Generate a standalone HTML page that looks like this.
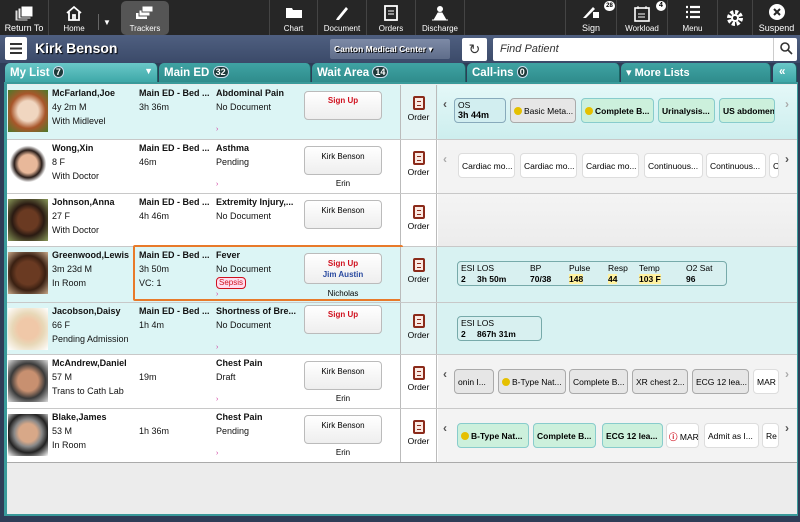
<!DOCTYPE html>
<html><head><meta charset="utf-8"><style>
*{box-sizing:border-box;margin:0;padding:0}
body{width:800px;height:522px;overflow:hidden;background:#2f3d57;font-family:"Liberation Sans","DejaVu Sans",sans-serif;position:relative}
.a{position:absolute}
.tb{background:#262626;height:35px;left:0;top:0;width:800px}
.btn{position:absolute;top:0;height:35px;color:#fff;font-size:8px;text-align:center;border-right:1px solid #444}
.btn .l{position:absolute;bottom:2px;left:0;right:0}
.btn svg{position:absolute;left:50%;top:5px;transform:translateX(-50%)}
.hdr{left:0;top:35px;width:800px;height:28px;background:linear-gradient(#4f5f80,#3b4a69)}
.tab{position:absolute;top:63px;height:19px;background:linear-gradient(#3fa3a3,#2f8c8c);color:#fff;font-weight:bold;font-size:11.5px;padding:3px 0 0 5px;border-radius:5px 5px 0 0;border-right:1px solid #1c6464}
.cnt{display:inline-block;background:#1e3a3a;border:1px solid #cde;border-radius:6px;font-size:9px;padding:0 2px;line-height:10px;vertical-align:1px}
.row{position:absolute;left:7px;width:790px;border-bottom:1px solid #c8c8c8}
.ph{position:absolute;left:1px;top:5px;width:40px;height:42px}
.t{position:absolute;font-size:9px;color:#111;line-height:14px;white-space:nowrap}
.b{font-weight:bold}
.sb{position:absolute;left:297px;top:6px;width:78px;height:29px;border:1px solid #bbb;border-radius:4px;background:linear-gradient(#fff,#eee);font-size:8px;text-align:center;padding-top:5px}
.red{color:#d0101e;font-weight:bold}
.sub{position:absolute;left:297px;width:78px;text-align:center;font-size:8px;top:39px}
.ord{position:absolute;left:393px;top:0;width:37px;bottom:0;border-left:1px solid #bbb;border-right:1px solid #bbb;font-size:8.5px;text-align:center;padding-top:11px}
.ord i{display:block;margin:0 auto 2px;width:12px;height:14px;border:2px solid #8b2a1a;border-radius:2px;background:#fbe9e2;position:relative}
.ord i:after{content:"";position:absolute;left:2px;top:3px;width:4px;height:3px;border-top:1px solid #8b2a1a;border-bottom:1px solid #8b2a1a}
.chip{position:absolute;height:25px;border:1px solid #aaa;border-radius:4px;font-size:8.5px;font-weight:bold;padding:7px 3px 0;white-space:nowrap;overflow:hidden}
.w{background:#fff;border-color:#ddd;font-weight:normal}
.g{background:#ccf0dc;border-color:#8cc}
.gy{background:#e6e6e6}
.dot{display:inline-block;width:8px;height:8px;border-radius:50%;background:#e5c000;margin-right:2px;vertical-align:-1px}
.arr{position:absolute;font-size:12px;font-weight:bold;color:#555;top:12px}
.pk{position:absolute;left:209px;top:41px;font-size:7px;color:#d040a0}
</style></head><body>
<div class="a tb"></div>
<div class="btn" style="left:0;width:49px"><svg width="20" height="18"><rect x="1" y="5" width="13" height="11" fill="#ddd" stroke="#222"/><rect x="4" y="3" width="13" height="11" fill="#eee" stroke="#222"/><rect x="7" y="1" width="12" height="11" fill="#fff" stroke="#222"/></svg><div class="l" style="font-size:9px">Return To</div></div>
<div class="btn" style="left:50px;width:48px;border-right:0"><svg width="18" height="16"><path d="M2 8 L9 2 L16 8 M4 7 V15 H14 V7 M8 15 V10 H10 V15" stroke="#fff" stroke-width="1.8" fill="none"/></svg><div class="l">Home</div></div>
<div class="a" style="left:98px;top:14px;width:1px;height:16px;background:#666"></div>
<div class="a" style="left:103px;top:18px;color:#fff;font-size:8px">▼</div>
<div class="a" style="left:121px;top:1px;width:48px;height:34px;background:#555;border-radius:5px"></div>
<div class="btn" style="left:121px;width:48px;border:0;background:transparent"><svg width="20" height="16"><rect x="1" y="8" width="11" height="6" fill="#fff"/><rect x="4" y="5" width="11" height="6" fill="#fff" stroke="#555"/><rect x="7" y="1" width="11" height="6" fill="#fff" stroke="#555"/></svg><div class="l">Trackers</div></div>
<div class="btn" style="left:269px;width:49px;border-left:1px solid #444"><svg width="18" height="14"><path d="M1 3 H7 L8 5 H17 V13 H1 Z" fill="#fff"/></svg><div class="l">Chart</div></div>
<div class="btn" style="left:318px;width:49px"><svg width="16" height="16"><path d="M3 13 L12 2 L14 4 L5 15 L2 15 Z" fill="#fff"/></svg><div class="l">Document</div></div>
<div class="btn" style="left:367px;width:49px"><svg width="14" height="16"><rect x="1" y="1" width="12" height="14" fill="none" stroke="#fff" stroke-width="1.8"/><path d="M4 6H10M4 9H10" stroke="#fff"/></svg><div class="l">Orders</div></div>
<div class="btn" style="left:416px;width:49px"><svg width="20" height="17"><circle cx="10" cy="4" r="3" fill="#fff"/><path d="M4 15 L8 8 H12 L16 15 Z M2 15 H18" stroke="#fff" fill="#fff"/></svg><div class="l">Discharge</div></div>
<div class="btn" style="left:465px;width:101px"></div>
<div class="btn" style="left:566px;width:51px"><svg width="20" height="14"><path d="M2 13 L12 2 L14 4 L5 13Z" fill="#fff"/><rect x="12" y="7" width="6" height="6" fill="#fff"/></svg><div class="l" style="font-size:9px">Sign</div></div>
<div class="a" style="left:604px;top:1px;width:11px;height:10px;border-radius:5px;background:#fff;font-size:6px;text-align:center;line-height:10px;font-weight:bold">28</div>
<div class="btn" style="left:617px;width:51px"><svg width="18" height="17"><rect x="2" y="3" width="14" height="13" fill="none" stroke="#fff" stroke-width="1.6"/><path d="M5 1V4M13 1V4M5 9H12M5 12H12" stroke="#fff"/></svg><div class="l">Workload</div></div>
<div class="a" style="left:656px;top:1px;width:10px;height:10px;border-radius:5px;background:#fff;font-size:7px;text-align:center;line-height:10px;font-weight:bold">4</div>
<div class="btn" style="left:668px;width:50px"><svg width="16" height="14"><path d="M1 2H3M5 2H15M1 7H3M5 7H15M1 12H3M5 12H15" stroke="#fff" stroke-width="2.2"/></svg><div class="l">Menu</div></div>
<div class="btn" style="left:718px;width:35px"><svg width="18" height="18" style="top:9px"><circle cx="9" cy="9" r="6" fill="none" stroke="#fff" stroke-width="4" stroke-dasharray="3 1.7"/><circle cx="9" cy="9" r="4" fill="#fff"/><circle cx="9" cy="9" r="2" fill="#262626"/></svg></div>
<div class="btn" style="left:753px;width:47px;border:0"><svg width="18" height="18" style="top:3px"><circle cx="9" cy="9" r="8" fill="#fff"/><path d="M6 6L12 12M12 6L6 12" stroke="#262626" stroke-width="2"/></svg><div class="l" style="font-size:9px">Suspend</div></div>

<div class="a hdr"></div>
<div class="a" style="left:5px;top:37px;width:22px;height:23px;background:#fff;border-radius:2px"><svg width="22" height="23"><path d="M5 7H17M5 11.5H17M5 16H17" stroke="#333" stroke-width="2"/></svg></div>
<div class="a" style="left:35px;top:40px;color:#fff;font-size:14px;font-weight:bold;text-shadow:1px 1px 1px #000">Kirk Benson</div>
<div class="a" style="left:330px;top:39px;width:120px;height:20px;background:linear-gradient(#7d8aa6,#5f6d8a);border-radius:2px;color:#fff;font-size:8.5px;font-weight:bold;padding:5px 0 0 4px;text-shadow:1px 1px 0 #000">Canton Medical Center ▾</div>
<div class="a" style="left:462px;top:38px;width:25px;height:23px;background:#fff;border-radius:2px;font-size:14px;text-align:center;line-height:23px;color:#333">↻</div>
<div class="a" style="left:493px;top:38px;width:304px;height:23px;background:#fff;border-radius:2px;font-size:11px;font-style:italic;color:#333;padding:5px 0 0 7px">Find Patient</div>
<div class="a" style="left:773px;top:38px;width:1px;height:23px;background:#ccc"></div>
<div class="a" style="left:779px;top:41px"><svg width="14" height="14"><circle cx="6" cy="6" r="4" fill="none" stroke="#333" stroke-width="1.6"/><path d="M9 9L13 13" stroke="#333" stroke-width="1.6"/></svg></div>

<div class="tab" style="left:5px;width:153px;background:linear-gradient(#6ac8c8,#3ea8a8)">My List <span class="cnt">7</span><span style="position:absolute;right:4px;top:3px;font-size:9px">▼</span></div>
<div class="tab" style="left:159px;width:152px">Main ED <span class="cnt">32</span></div>
<div class="tab" style="left:312px;width:154px">Wait Area <span class="cnt">14</span></div>
<div class="tab" style="left:467px;width:153px">Call-ins <span class="cnt">0</span></div>
<div class="tab" style="left:621px;width:150px;font-size:11px">▾ More Lists</div>
<div class="tab" style="left:773px;width:24px;background:linear-gradient(#6ac8c8,#3ea8a8);padding-left:6px">«</div>

<div class="a" style="left:4px;top:82px;width:794px;height:434px;background:#3a9a9a"></div>
<div class="a" style="left:7px;top:84px;width:790px;height:430px;background:#ececec"></div>

<div class="row" style="top:85px;height:55px;background:#dcf5f5">
<div class="ph" style="background:radial-gradient(circle at 50% 50%,#f0d6c0 35%,#a8562a 60%,#4a7a2a)"></div>
<div class="t b" style="left:45px;top:1px">McFarland,Joe</div><div class="t" style="left:45px;top:15px">4y 2m M</div><div class="t" style="left:45px;top:29px">With Midlevel</div>
<div class="t b" style="left:132px;top:1px">Main ED - Bed ...</div><div class="t" style="left:132px;top:15px">3h 36m</div>
<div class="t b" style="left:209px;top:1px">Abdominal Pain</div><div class="t" style="left:209px;top:15px">No Document</div><div class="pk">›</div>
<div class="sb" style="padding-top:4px"><span class="red">Sign Up</span></div>
<div class="ord" style="background:#e4f4f4"><i></i>Order</div>
<div class="a" style="left:431px;top:0;width:359px;height:54px;background:linear-gradient(#e4f8f8,#cdeeee)"></div>
<div class="arr" style="left:436px">‹</div>
<div class="chip" style="left:447px;top:13px;width:52px;background:#d2eef0;border-color:#8ab;padding-top:1px;font-weight:normal">OS<br><b style="font-size:9px">3h 44m</b></div>
<div class="chip gy" style="left:503px;top:13px;width:66px;font-weight:normal"><span class="dot"></span>Basic Meta...</div>
<div class="chip g" style="left:574px;top:13px;width:73px"><span class="dot"></span>Complete B...</div>
<div class="chip g" style="left:651px;top:13px;width:57px">Urinalysis...</div>
<div class="chip g" style="left:712px;top:13px;width:56px">US abdomen</div>
<div class="arr" style="left:778px;color:#aaa">›</div>
</div>

<div class="row" style="top:140px;height:54px;background:#fff">
<div class="ph" style="background:radial-gradient(circle at 50% 45%,#e8b89a 30%,#2a1e1a 45%,#fff 60%)"></div>
<div class="t b" style="left:45px;top:1px">Wong,Xin</div><div class="t" style="left:45px;top:15px">8 F</div><div class="t" style="left:45px;top:29px">With Doctor</div>
<div class="t b" style="left:132px;top:1px">Main ED - Bed ...</div><div class="t" style="left:132px;top:15px">46m</div>
<div class="t b" style="left:209px;top:1px">Asthma</div><div class="t" style="left:209px;top:15px">Pending</div><div class="pk">›</div>
<div class="sb">Kirk Benson</div><div class="sub">Erin</div>
<div class="ord"><i></i>Order</div>
<div class="a" style="left:431px;top:0;width:359px;height:53px;background:#f3f3f3"></div>
<div class="arr" style="left:436px;color:#aaa">‹</div>
<div class="chip w" style="left:451px;top:13px;width:57px">Cardiac mo...</div>
<div class="chip w" style="left:513px;top:13px;width:57px">Cardiac mo...</div>
<div class="chip w" style="left:575px;top:13px;width:57px">Cardiac mo...</div>
<div class="chip w" style="left:637px;top:13px;width:59px">Continuous...</div>
<div class="chip w" style="left:699px;top:13px;width:60px">Continuous...</div>
<div class="chip w" style="left:762px;top:13px;width:10px">Ca</div>
<div class="arr" style="left:778px">›</div>
</div>

<div class="row" style="top:194px;height:53px;background:#fff">
<div class="ph" style="background:radial-gradient(circle at 50% 50%,#6a3a22 35%,#2a1a12 55%,#8a9a5a)"></div>
<div class="t b" style="left:45px;top:1px">Johnson,Anna</div><div class="t" style="left:45px;top:15px">27 F</div><div class="t" style="left:45px;top:29px">With Doctor</div>
<div class="t b" style="left:132px;top:1px">Main ED - Bed ...</div><div class="t" style="left:132px;top:15px">4h 46m</div>
<div class="t b" style="left:209px;top:1px">Extremity Injury,...</div><div class="t" style="left:209px;top:15px">No Document</div>
<div class="sb">Kirk Benson</div>
<div class="ord"><i></i>Order</div>
<div class="a" style="left:431px;top:0;width:359px;height:52px;background:linear-gradient(#f4f4f4,#ececec)"></div>
</div>

<div class="row" style="top:247px;height:56px;background:#dcf5f5">
<div class="ph" style="background:radial-gradient(circle at 50% 50%,#6a3a22 40%,#3a2012 60%,#c8a888)"></div>
<div class="t b" style="left:45px;top:1px">Greenwood,Lewis</div><div class="t" style="left:45px;top:15px">3m 23d M</div><div class="t" style="left:45px;top:29px">In Room</div>
<div class="t b" style="left:132px;top:1px">Main ED - Bed ...</div><div class="t" style="left:132px;top:15px">3h 50m</div><div class="t" style="left:132px;top:29px">VC: 1</div>
<div class="t b" style="left:209px;top:1px">Fever</div><div class="t" style="left:209px;top:15px">No Document</div>
<div class="t" style="left:209px;top:30px;font-size:8px;line-height:10px;color:#d0101e;border:1px solid #d0101e;border-radius:4px;padding:0 2px;background:#fde">Sepsis</div><div class="pk" style="top:44px">›</div>
<div class="sb" style="height:31px;padding-top:5px"><span class="red">Sign Up</span><br><b style="color:#2a4aa0;line-height:13px">Jim Austin</b></div><div class="sub" style="top:42px">Nicholas</div>
<div class="a" style="left:126px;top:-2px;width:270px;height:56px;border:2px solid #e87a2a;border-radius:2px"></div>
<div class="ord" style="background:#e4f4f4"><i></i>Order</div>
<div class="a" style="left:431px;top:0;width:359px;height:55px;background:#d8f2f2"></div>
<div class="chip" style="left:450px;top:14px;width:270px;background:#d8f0f0;border-color:#7aa;font-weight:normal;padding:1px 3px;line-height:11px">
<span class="a" style="left:3px;top:1px">ESI<br><b>2</b></span><span class="a" style="left:19px;top:1px">LOS<br><b>3h 50m</b></span><span class="a" style="left:72px;top:1px">BP<br><b>70/38</b></span><span class="a" style="left:111px;top:1px">Pulse<br><b style="background:#fff2a0">148</b></span><span class="a" style="left:150px;top:1px">Resp<br><b style="background:#fff2a0">44</b></span><span class="a" style="left:181px;top:1px">Temp<br><b style="background:#fff2a0">103 F</b></span><span class="a" style="left:228px;top:1px">O2 Sat<br><b>96</b></span></div>
</div>

<div class="row" style="top:303px;height:52px;background:#dcf5f5">
<div class="ph" style="background:radial-gradient(circle at 50% 50%,#f0c8a8 35%,#e8d8b8 55%,#fff)"></div>
<div class="t b" style="left:45px;top:1px">Jacobson,Daisy</div><div class="t" style="left:45px;top:15px">66 F</div><div class="t" style="left:45px;top:29px">Pending Admission</div>
<div class="t b" style="left:132px;top:1px">Main ED - Bed ...</div><div class="t" style="left:132px;top:15px">1h 4m</div>
<div class="t b" style="left:209px;top:1px">Shortness of Bre...</div><div class="t" style="left:209px;top:15px">No Document</div><div class="pk">›</div>
<div class="sb" style="top:2px;padding-top:4px"><span class="red">Sign Up</span></div>
<div class="ord" style="background:#e4f4f4"><i></i>Order</div>
<div class="a" style="left:431px;top:0;width:359px;height:51px;background:#d8f2f2"></div>
<div class="chip" style="left:450px;top:13px;width:85px;background:#d8f0f0;border-color:#7aa;font-weight:normal;padding:1px 3px;line-height:11px"><span class="a" style="left:3px;top:1px">ESI<br><b>2</b></span><span class="a" style="left:19px;top:1px">LOS<br><b>867h 31m</b></span></div>
</div>

<div class="row" style="top:355px;height:54px;background:#fff">
<div class="ph" style="background:radial-gradient(circle at 50% 50%,#c89070 35%,#3a3a3a 60%,#ddd)"></div>
<div class="t b" style="left:45px;top:1px">McAndrew,Daniel</div><div class="t" style="left:45px;top:15px">57 M</div><div class="t" style="left:45px;top:29px">Trans to Cath Lab</div>
<div class="t" style="left:132px;top:15px">19m</div>
<div class="t b" style="left:209px;top:1px">Chest Pain</div><div class="t" style="left:209px;top:15px">Draft</div><div class="pk">›</div>
<div class="sb">Kirk Benson</div><div class="sub">Erin</div>
<div class="ord"><i></i>Order</div>
<div class="a" style="left:431px;top:0;width:359px;height:53px;background:#f3f3f3"></div>
<div class="arr" style="left:436px">‹</div>
<div class="chip gy" style="left:447px;top:14px;width:40px;font-weight:normal">onin I...</div>
<div class="chip gy" style="left:491px;top:14px;width:68px;font-weight:normal"><span class="dot"></span>B-Type Nat...</div>
<div class="chip gy" style="left:562px;top:14px;width:59px;font-weight:normal">Complete B...</div>
<div class="chip gy" style="left:625px;top:14px;width:56px;font-weight:normal">XR chest 2...</div>
<div class="chip gy" style="left:685px;top:14px;width:57px;font-weight:normal">ECG 12 lea...</div>
<div class="chip w" style="left:746px;top:14px;width:26px">MAR</div>
<div class="arr" style="left:778px;color:#aaa">›</div>
</div>

<div class="row" style="top:409px;height:54px;background:#fff;border-bottom:1px solid #aaa">
<div class="ph" style="background:radial-gradient(circle at 50% 45%,#d8a888 30%,#888 45%,#222 65%,#fff)"></div>
<div class="t b" style="left:45px;top:1px">Blake,James</div><div class="t" style="left:45px;top:15px">53 M</div><div class="t" style="left:45px;top:29px">In Room</div>
<div class="t" style="left:132px;top:15px">1h 36m</div>
<div class="t b" style="left:209px;top:1px">Chest Pain</div><div class="t" style="left:209px;top:15px">Pending</div><div class="pk">›</div>
<div class="sb">Kirk Benson</div><div class="sub">Erin</div>
<div class="ord"><i></i>Order</div>
<div class="a" style="left:431px;top:0;width:359px;height:53px;background:#f3f3f3"></div>
<div class="arr" style="left:436px">‹</div>
<div class="chip g" style="left:450px;top:14px;width:72px"><span class="dot"></span>B-Type Nat...</div>
<div class="chip g" style="left:526px;top:14px;width:63px">Complete B...</div>
<div class="chip g" style="left:595px;top:14px;width:61px">ECG 12 lea...</div>
<div class="chip w" style="left:659px;top:14px;width:33px;padding-left:2px"><span style="color:#d0101e;font-weight:bold">ⓘ</span> MAR</div>
<div class="chip w" style="left:697px;top:14px;width:55px">Admit as I...</div>
<div class="chip w" style="left:755px;top:14px;width:17px">Re</div>
<div class="arr" style="left:778px">›</div>
</div>
</body></html>
